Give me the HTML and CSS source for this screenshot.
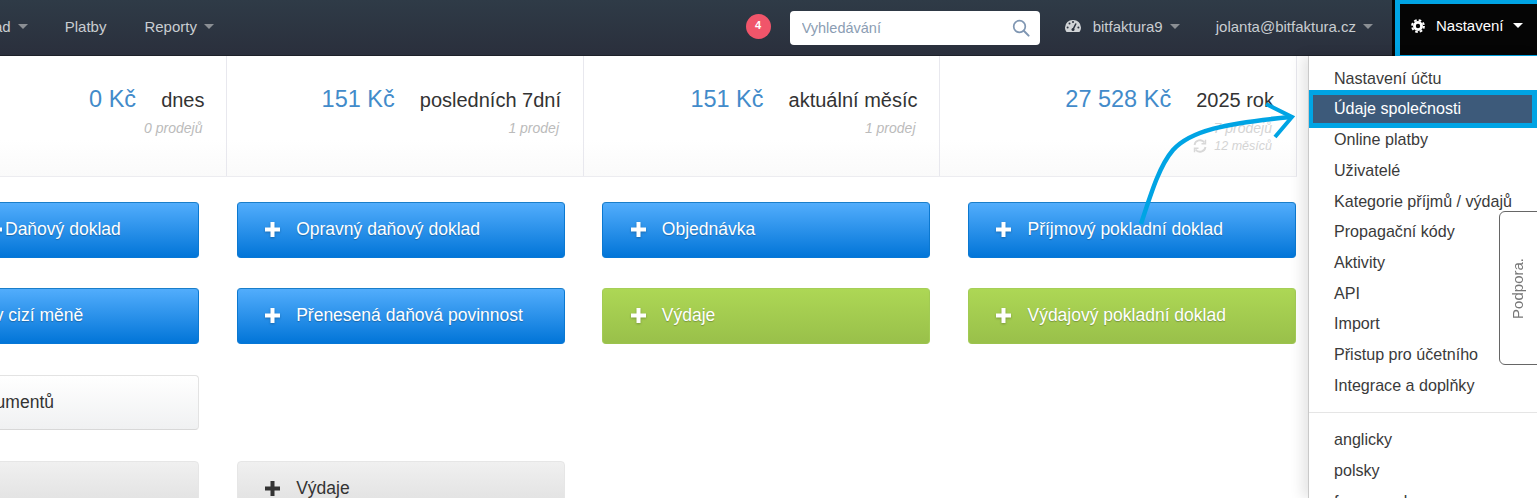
FILE: index.html
```html
<!DOCTYPE html>
<html lang="cs">
<head>
<meta charset="utf-8">
<title>BitFaktura</title>
<link rel="stylesheet" href="styles.css">
</head>
<body>

<div class="topbar">
  <a class="nav-item nav-first" href="#">Náklad<i class="caret"></i></a>
  <a class="nav-item nav-platby" href="#">Platby</a>
  <a class="nav-item nav-reporty" href="#">Reporty<i class="caret"></i></a>

  <span class="badge">4</span>
  <div class="search">
    <input type="text" placeholder="Vyhledávání">
    <svg width="18" height="18" viewBox="0 0 18 18"><circle cx="7.5" cy="7.5" r="5.8" fill="none" stroke="#7f96b2" stroke-width="1.7"/><path d="M11.8 11.8L16.6 16.6" stroke="#7f96b2" stroke-width="2" stroke-linecap="round"/></svg>
  </div>
  <a class="nav-item nav-account" href="#">
    <svg class="dash" width="16" height="14" viewBox="0 0 16 14"><path d="M8 1a7.6 7.6 0 0 0-8 7.5c0 1.8.6 3.3 1.6 4.5h12.8c1-1.200 1.600-2.700 1.600-4.500A7.600 7.600 0 0 0 8 1z" fill="#d0d3d6"/><path d="M8 10.500L11 4.500" stroke="#2b323e" stroke-width="1.500"/><circle cx="8" cy="10.500" r="1.500" fill="#2b323e"/><circle cx="2.600" cy="8.500" r="1" fill="#2b323e"/><circle cx="4.500" cy="4.500" r="1" fill="#2b323e"/><circle cx="8" cy="3" r="1" fill="#2b323e"/><circle cx="13.400" cy="8.500" r="1" fill="#2b323e"/></svg>
    bitfaktura9<i class="caret"></i>
  </a>
  <a class="nav-item nav-mail" href="#">jolanta@bitfaktura.cz<i class="caret"></i></a>
  <a class="nav-settings" href="#">
    <svg class="gear" width="14" height="14" viewBox="0 0 14 14"><circle cx="7" cy="7" r="3.600" fill="none" stroke="#fff" stroke-width="2.800"/><circle cx="7" cy="7" r="5.900" fill="none" stroke="#fff" stroke-width="2" stroke-dasharray="2.600 2.030"/></svg>
    Nastavení<i class="caret caret-white"></i>
  </a>
</div>

<div class="stats">
  <div class="stat">
    <div class="stat-top"><span class="stat-value">0 Kč</span><span class="stat-label">dnes</span></div>
    <div class="stat-sub">0 prodejů</div>
  </div>
  <div class="stat">
    <div class="stat-top"><span class="stat-value">151 Kč</span><span class="stat-label">posledních 7dní</span></div>
    <div class="stat-sub">1 prodej</div>
  </div>
  <div class="stat">
    <div class="stat-top"><span class="stat-value">151 Kč</span><span class="stat-label">aktuální měsíc</span></div>
    <div class="stat-sub">1 prodej</div>
  </div>
  <div class="stat stat-year">
    <div class="stat-top"><span class="stat-value">27 528 Kč</span><span class="stat-label">2025 rok</span></div>
    <div class="stat-sub">7 prodejů</div>
    <div class="stat-sub stat-sync">
      <svg width="14" height="14" viewBox="0 0 14 14" fill="none" stroke="#d8d8d8" stroke-width="1.800"><path d="M1.500 6a5.600 5.600 0 0 1 10-2.500"/><path d="M12.500 8a5.600 5.600 0 0 1-10 2.500"/><path d="M12.500 .8v4h-4" stroke-width="1.400"/><path d="M1.500 13.200v-4h4" stroke-width="1.400"/></svg>
      12 měsíců
    </div>
  </div>
</div>

<div class="buttons">
  <a class="btn btn-blue btn-shift" href="#"><svg class="plus" viewBox="0 0 15 15"><path d="M5.500 0h4v5.500h5.500v4H9.500V15h-4V9.500H0v-4h5.500z"/></svg>Daňový doklad</a>
  <a class="btn btn-blue" href="#"><svg class="plus" viewBox="0 0 15 15"><path d="M5.500 0h4v5.500h5.500v4H9.500V15h-4V9.500H0v-4h5.500z"/></svg>Opravný daňový doklad</a>
  <a class="btn btn-blue" href="#"><svg class="plus" viewBox="0 0 15 15"><path d="M5.500 0h4v5.500h5.500v4H9.500V15h-4V9.500H0v-4h5.500z"/></svg>Objednávka</a>
  <a class="btn btn-blue" href="#"><svg class="plus" viewBox="0 0 15 15"><path d="M5.500 0h4v5.500h5.500v4H9.500V15h-4V9.500H0v-4h5.500z"/></svg>Příjmový pokladní doklad</a>

  <a class="btn btn-blue" href="#"><svg class="plus" viewBox="0 0 15 15"><path d="M5.500 0h4v5.500h5.500v4H9.500V15h-4V9.500H0v-4h5.500z"/></svg>Faktura v cizí měně</a>
  <a class="btn btn-blue" href="#"><svg class="plus" viewBox="0 0 15 15"><path d="M5.500 0h4v5.500h5.500v4H9.500V15h-4V9.500H0v-4h5.500z"/></svg>Přenesená daňová povinnost</a>
  <a class="btn btn-green" href="#"><svg class="plus" viewBox="0 0 15 15"><path d="M5.500 0h4v5.500h5.500v4H9.500V15h-4V9.500H0v-4h5.500z"/></svg>Výdaje</a>
  <a class="btn btn-green" href="#"><svg class="plus" viewBox="0 0 15 15"><path d="M5.500 0h4v5.500h5.500v4H9.500V15h-4V9.500H0v-4h5.500z"/></svg>Výdajový pokladní doklad</a>

  <a class="btn btn-white btn-right" href="#">Seznam dokumentů</a>
  <span></span><span></span><span></span>

  <a class="btn btn-grey" href="#"></a>
  <a class="btn btn-grey" href="#"><svg class="plus" viewBox="0 0 15 15"><path d="M5.500 0h4v5.500h5.500v4H9.500V15h-4V9.500H0v-4h5.500z"/></svg>Výdaje</a>
</div>

<ul class="menu">
  <li><a href="#">Nastavení účtu</a></li>
  <li class="active"><a href="#">Údaje společnosti</a></li>
  <li><a href="#">Online platby</a></li>
  <li><a href="#">Uživatelé</a></li>
  <li><a href="#">Kategorie příjmů / výdajů</a></li>
  <li><a href="#">Propagační kódy</a></li>
  <li><a href="#">Aktivity</a></li>
  <li><a href="#">API</a></li>
  <li><a href="#">Import</a></li>
  <li><a href="#">Přistup pro účetního</a></li>
  <li><a href="#">Integrace a doplňky</a></li>
  <li class="divider"></li>
  <li><a href="#">anglicky</a></li>
  <li><a href="#">polsky</a></li>
  <li><a href="#">francouzsky</a></li>
</ul>

<div class="support"><span>Podpora.</span></div>

<svg class="arrow" width="170" height="130" viewBox="1135 100 170 130" fill="none" stroke="#00a4e4" stroke-width="4.500">
  <path d="M1141 224C1152 190 1160 165 1173 150C1190 131 1225 123 1291 117"/>
  <path d="M1266 104L1292 117L1275 137" stroke-width="4"/>
</svg>

</body>
</html>
```

FILE: styles.css
```css
html, body {
    margin: 0;
    height: 498px;
    overflow: hidden;
}
body {
    font-family: "Liberation Sans", Arial, sans-serif;
    font-size: 15px;
    color: #333;
    background: #fff;
    position: relative;
}
a {
    text-decoration: none;
    color: inherit;
}

/* top bar */
.topbar {
    display: flex;
    align-items: center;
    height: 56px;
    padding-bottom: 4px;
    box-sizing: border-box;
    background: linear-gradient(#2f3b47, #2a2f3c);
    box-shadow: inset 0 -1px 0 #1d2129;
}
.nav-item {
    display: flex;
    align-items: center;
    color: #c9cdd1;
    white-space: nowrap;
}
.nav-first {
    margin-left: -36px;
}
.nav-platby {
    margin-left: 37px;
}
.nav-reporty {
    margin-left: 38px;
}
.caret {
    display: block;
    width: 0;
    height: 0;
    margin-left: 7px;
    border-left: 5px solid transparent;
    border-right: 5px solid transparent;
    border-top: 5px solid #8b8f94;
}
.caret-white {
    margin-left: 9px;
    border-top-color: #fff;
}
.badge {
    width: 25px;
    height: 25px;
    margin-left: auto;
    border-radius: 50%;
    background: #f0556a;
    color: #fff;
    font-size: 11px;
    font-weight: bold;
    line-height: 22px;
    text-align: center;
}
.search {
    display: flex;
    align-items: center;
    width: 250px;
    height: 34px;
    margin: 4px 0 0 19px;
    padding: 0 10px 0 12px;
    box-sizing: border-box;
    background: #fff;
    border-radius: 4px;
}
.search input {
    flex: 1;
    min-width: 0;
    border: 0;
    padding: 0;
    outline: 0;
    font: 14.500px "Liberation Sans", Arial, sans-serif;
}
.search input::placeholder {
    color: #8b9db3;
    opacity: 1;
}
.nav-account {
    margin-left: 25px;
}
.dash {
    margin-right: 12px;
}
.nav-mail {
    margin-left: 36px;
}
.nav-settings {
    display: flex;
    align-items: center;
    align-self: stretch;
    width: 142px;
    margin: 0 0 -5px 22px;
    padding: 0 0 8px 11px;
    box-sizing: border-box;
    background: #050505;
    border: solid #00a4e4;
    border-width: 4px 0 2px 5px;
    box-shadow: -3px 0 0 #050505;
    color: #fff;
    white-space: nowrap;
}
.gear {
    margin-right: 11px;
}

/* sales summary */
.stats {
    display: grid;
    grid-template-columns: repeat(4, 356.500px);
    width: 1426px;
    margin-left: -129.500px;
    height: 121px;
    border-bottom: 1px solid #ececf0;
    box-sizing: border-box;
    background: linear-gradient(#fff 70%, #fafafa);
}
.stat {
    padding: 30px 21.500px 0 0;
    border-right: 1px solid #e8e8ee;
    text-align: right;
}
.stat-top {
    display: flex;
    justify-content: flex-end;
    align-items: baseline;
    gap: 25px;
}
.stat-value {
    font-size: 23.500px;
    color: #428bca;
}
.stat-label {
    font-size: 20px;
    color: #333;
}
.stat-sub {
    margin-top: 7px;
    padding-right: 2px;
    font-size: 14px;
    font-style: italic;
    color: #bbb;
}
.stat-year .stat-sub {
    color: #d4d4d4;
}
.stat-year .stat-sync {
    display: flex;
    justify-content: flex-end;
    align-items: center;
    gap: 7px;
    margin-top: 3px;
    font-size: 12.500px;
}

/* new document buttons */
.buttons {
    display: grid;
    grid-template-columns: repeat(4, 328px);
    column-gap: 37.670px;
    row-gap: 30.830px;
    grid-auto-rows: 55.500px;
    margin: 25px 0 0 -129px;
}
.btn {
    display: flex;
    align-items: center;
    padding: 0 0 1px 27.500px;
    border: 1px solid;
    border-radius: 4px;
    box-sizing: border-box;
    font-size: 17.500px;
    white-space: nowrap;
}
.btn-shift {
    padding-left: 115px;
}
.btn-shift .plus {
    margin-right: 3px;
}
.btn-right {
    justify-content: flex-end;
    padding: 0 144px 0 0;
}
.btn-blue {
    border-color: #1a7ec9 #0b78d0 #0677d6;
    background: linear-gradient(#52adfc, #0275d8);
    color: #fff;
    text-shadow: 0 1px 1px rgba(0, 0, 0, .25);
}
.btn-green {
    border-color: #a6cf58 #a2cb54 #9cc34e;
    background: linear-gradient(#add755, #99c04a);
    color: #fff;
    text-shadow: 0 1px 1px rgba(0, 0, 0, .25);
}
.btn-white {
    border-color: #e3e3e3;
    border-bottom-color: #d8d8d8;
    background: linear-gradient(#fff, #f0f1f2);
}
.btn-grey {
    border-color: #e6e6e6;
    background: linear-gradient(#f0f0f0, #dedede);
}
.plus {
    flex: none;
    width: 15px;
    height: 15px;
    margin-right: 16px;
    fill: #fff;
    filter: drop-shadow(0 1px 1px rgba(0, 0, 0, .25));
}
.btn-grey .plus {
    fill: #333;
    filter: none;
}

/* settings dropdown */
.menu {
    position: absolute;
    top: 56px;
    left: 1308px;
    right: 0;
    height: 442px;
    margin: 0;
    padding: 7px 0 0;
    list-style: none;
    overflow: hidden;
    box-sizing: border-box;
    background: #fff;
    border-left: 1px solid #c9c9c9;
    box-shadow: -6px 0 12px rgba(0, 0, 0, .1);
    font-size: 16.100px;
    color: #3a3a3a;
}
.menu li a {
    display: block;
    height: 30.700px;
    padding-left: 25px;
    line-height: 30.700px;
    white-space: nowrap;
}
.menu .active {
    position: relative;
}
.menu .active a {
    height: 28px;
    margin: -4px 0 -3.500px -1px;
    padding-left: 21px;
    line-height: 27px;
    border: 5px solid #00a4e4;
    background: #3d5a7a;
    color: #fff;
    position: relative;
}
.menu .divider {
    height: 1px;
    margin: 12px 0 11px;
    background: #e5e5e5;
}
.support {
    position: absolute;
    top: 211px;
    left: 1499px;
    width: 50px;
    height: 154px;
    display: flex;
    align-items: center;
    padding-left: 9px;
    box-sizing: border-box;
    background: #fff;
    border: 1px solid #666;
    border-radius: 6px;
    font-size: 15px;
    color: #777;
}
.support span {
    writing-mode: vertical-rl;
    transform: rotate(180deg);
}
.arrow {
    position: absolute;
    top: 100px;
    left: 1135px;
}
```
